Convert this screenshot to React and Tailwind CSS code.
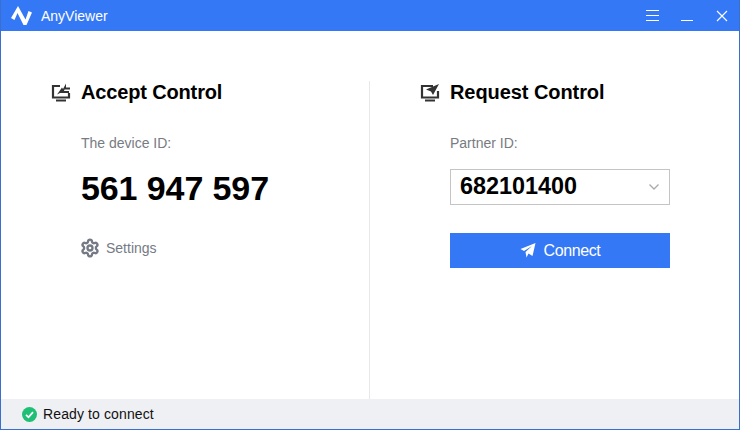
import React from "react";
import { Settings } from "lucide-react";

const Logo = () => (
  <svg width="21" height="19" viewBox="0 0 21 19" fill="#fff">
    <path d="M0 12 L7 0 L14.5 13.5 L17.5 5 L21 6.5 L15.5 19 L12.5 19 L6.5 7 L3.5 14 Z" />
  </svg>
);

const AcceptIcon = () => (
  <svg width="20" height="20" viewBox="0 0 20 20" fill="none">
    <path d="M9 4H2v11.5h16V11" stroke="#333" strokeWidth="2.2" />
    <path d="M5 18.5h10" stroke="#333" strokeWidth="2" />
    <path d="M6 12.5 L11 5.5 L12 7 L15 1.5 L15 5.5 L19 5.5 L19 7.5 L13.5 7.5 L13 9 L18 9 L18 11 L9 11 Z" fill="#333" />
  </svg>
);

const RequestIcon = () => (
  <svg width="20" height="20" viewBox="0 0 20 20" fill="none">
    <path d="M13 4H2v11.5h16V9" stroke="#333" strokeWidth="2.2" />
    <path d="M5 18.5h10" stroke="#333" strokeWidth="2" />
    <path d="M6 7.5 L19 2 L13 13 L11 9.5 Z" fill="#333" />
  </svg>
);

const SendIcon = () => (
  <svg width="16" height="15" viewBox="0 0 16 15" fill="#fff">
    <path d="M15.5 0 L12.5 13 L8.5 10.5 L6.5 14.5 L5.5 9 L12 3 L4 8 L0.5 6 Z" />
  </svg>
);

export default function App() {
  return (
    <div className="w-[740px] h-[430px] flex flex-col border border-t-0 border-[#3a6fd0] bg-white font-['Liberation_Sans',Arial,sans-serif] overflow-hidden">
      {/* Title bar */}
      <div className="h-[31px] shrink-0 bg-[#3478f6] flex items-center text-white">
        <div className="ml-[10px] mr-[9px] flex items-center">
          <Logo />
        </div>
        <span className="text-sm leading-none">AnyViewer</span>
        <div className="ml-auto flex items-center">
          <div className="w-[13px] flex flex-col gap-[4px] mr-[22px]">
            <div className="h-px bg-white"></div>
            <div className="h-px bg-white"></div>
            <div className="h-px bg-white"></div>
          </div>
          <div className="w-[12px] h-px bg-white mt-[9px] mr-[23px]"></div>
          <svg width="12" height="12" viewBox="0 0 12 12" className="mr-[11px]" stroke="#fff" strokeWidth="1.1">
            <path d="M1 1l10 10M11 1L1 11" />
          </svg>
        </div>
      </div>

      <div className="flex-1 flex pt-[50px]">
        {/* Accept Control */}
        <div className="w-[369px] border-r border-[#e8e8e8] pl-[50px]">
          <div className="flex items-center h-[22px]">
            <AcceptIcon />
            <h2 className="ml-[10px] text-xl font-bold leading-none tracking-[-0.15px] text-black">Accept Control</h2>
          </div>
          <p className="ml-[30px] mt-[33px] text-sm leading-none text-[#777b82]">The device ID:</p>
          <p className="ml-[30px] mt-[21px] text-[34px] leading-none tracking-[-0.1px] font-bold text-black">561 947 597</p>
          <div className="ml-[30px] mt-[33px] flex items-center text-[#747a85]">
            <Settings size={20} strokeWidth={2.8} className="-ml-px" />
            <span className="ml-[6px] text-sm leading-none">Settings</span>
          </div>
        </div>

        {/* Request Control */}
        <div className="flex-1 pl-[50px]">
          <div className="flex items-center h-[22px]">
            <RequestIcon />
            <h2 className="ml-[10px] text-xl font-bold leading-none tracking-[-0.07px] text-black">Request Control</h2>
          </div>
          <p className="ml-[30px] mt-[33px] text-sm leading-none text-[#777b82]">Partner ID:</p>
          <div className="ml-[30px] mt-[19px] w-[220px] h-[36px] border border-[#c4c4c4] flex items-center pl-[9px] pr-[10px]">
            <span className="text-[23.4px] leading-none font-bold text-black">682101400</span>
            <svg width="10" height="6" viewBox="0 0 10 6" fill="none" stroke="#aaa" strokeWidth="1.3" className="ml-auto">
              <path d="M0.5 0.5l4.5 4.5 4.5-4.5" />
            </svg>
          </div>
          <div className="ml-[30px] mt-[28px] w-[220px] h-[35px] bg-[#3478f6] flex items-center justify-center text-white">
            <SendIcon />
            <span className="ml-[8px] text-base leading-none tracking-[-0.4px]">Connect</span>
          </div>
        </div>
      </div>

      {/* Status bar */}
      <div className="h-[30px] shrink-0 bg-[#eff0f4] flex items-center pl-[21px]">
        <svg width="15" height="15" viewBox="0 0 15 15">
          <circle cx="7.5" cy="7.5" r="7.5" fill="#1fbf75" />
          <path d="M4 7.8l2.5 2.5L11 5.2" fill="none" stroke="#fff" strokeWidth="1.8" />
        </svg>
        <span className="ml-[6px] text-sm leading-none tracking-[0.12px] text-[#111]">Ready to connect</span>
      </div>
    </div>
  );
}
